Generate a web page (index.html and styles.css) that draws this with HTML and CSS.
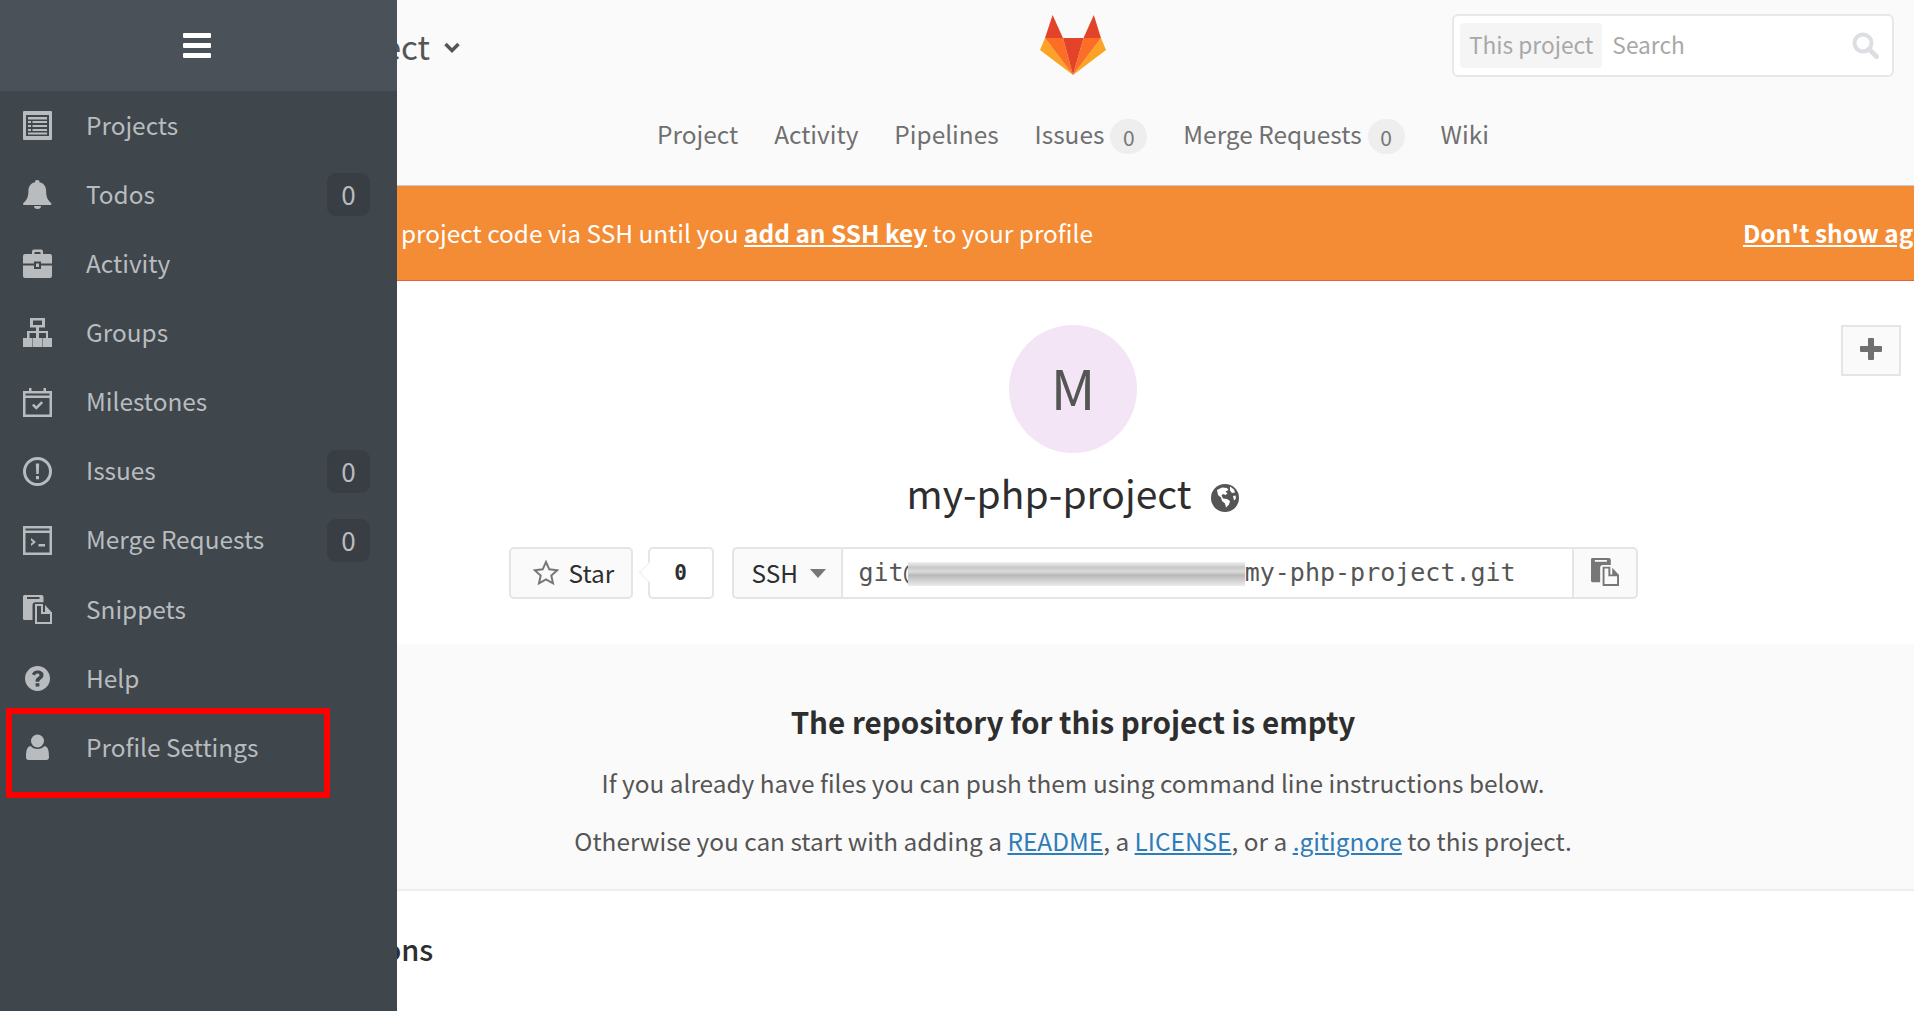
FILE: index.html
```html
<!DOCTYPE html>
<html lang="en">
<head>
<meta charset="UTF-8">
<meta name="viewport" content="width=device-width, initial-scale=1.0">
<title>my-php-project</title>
<link rel="stylesheet" href="styles.css">
</head>
<body>

<svg class="icon-defs" width="0" height="0">
  <symbol id="i-projects" viewBox="0 0 29 29">
    <path fill-rule="evenodd" d="M0 1a1 1 0 0 1 1-1h27a1 1 0 0 1 1 1v27a1 1 0 0 1-1 1H1a1 1 0 0 1-1-1zM3 4v21h23V4z"/>
    <path d="M5 6h19v2.500H5zM5 10h3v2H5zM9.500 10H24v2H9.500zM5 14h3v2H5zM9.500 14H24v2H9.500zM5 18h3v2H5zM9.500 18H24v2H9.500zM5 21.500h19v2H5z"/>
  </symbol>
  <symbol id="i-bell" viewBox="0 0 29 29">
    <path d="M14.500 0a2 2 0 0 1 2 2.200c4.300.9 6.600 4.300 6.600 8.600 0 6.500 1.700 9.600 5.400 12.700 0 1-.6 1.500-1.500 1.500H1.500C.6 25 0 24.500 0 23.500c3.700-3.100 5.400-6.200 5.400-12.700 0-4.300 2.300-7.700 6.600-8.600A2 2 0 0 1 14.500 0z"/>
    <path d="M11 26h7a3.500 3 0 0 1-7 0z"/>
  </symbol>
  <symbol id="i-briefcase" viewBox="0 0 29 29">
    <path fill-rule="evenodd" d="M9 5V2.500A2 2 0 0 1 11 .5h7a2 2 0 0 1 2 2V5h7a2 2 0 0 1 2 2v7.500H18v-2h-7v2H0V7a2 2 0 0 1 2-2zM11.500 5h6V3h-6z"/>
    <path fill-rule="evenodd" d="M0 16.500h11V20h7v-3.500h11V27a2 2 0 0 1-2 2H2a2 2 0 0 1-2-2z"/>
    <path d="M13 14.500h3V18h-3z"/>
  </symbol>
  <symbol id="i-sitemap" viewBox="0 0 29 29">
    <path fill-rule="evenodd" d="M7 0h15v9.500h-6V13h9v7h4v9h-10v-9h4v-5H16v5h3.500v9h-10v-9H13v-5H6.500v5h3.500v9H0v-9h4v-7h9V9.500H7zM10 2.500v4.500h9V2.500z"/>
  </symbol>
  <symbol id="i-calendar" viewBox="0 0 29 29">
    <path fill-rule="evenodd" d="M0 3h6V0h2.500v3h12V0H23v3h6v26H0zM2.500 5.500v2h24v-2zM2.500 10v16.500h24V10z"/>
    <path d="M9 17.500l1.800-1.800 2.500 2.500 5-5 1.800 1.800-6.800 6.800z"/>
  </symbol>
  <symbol id="i-issue" viewBox="0 0 29 29">
    <path fill-rule="evenodd" d="M14.500 0a14.500 14.500 0 1 1 0 29 14.500 14.500 0 0 1 0-29zm0 3a11.500 11.500 0 1 0 0 23 11.500 11.500 0 0 0 0-23z"/>
    <path d="M12.800 6.500h3.400l-.5 10.500h-2.400zM13 19h3v3.200h-3z"/>
  </symbol>
  <symbol id="i-terminal" viewBox="0 0 29 29">
    <path fill-rule="evenodd" d="M0 0h29v29H0zM2.500 2.500v2h24v-2zM2.500 7v19.500h24V7z"/>
    <path d="M8 12l5 4-5 4v-2.600l2-1.400-2-1.400zM15.500 18h6.500v2.500h-6.500z"/>
  </symbol>
  <symbol id="i-files" viewBox="0 0 29 29">
    <path fill-rule="evenodd" d="M1.500 0h17a2 2 0 0 1 2 2v5.200h-8a3 3 0 0 0-3 3V25H1.500A1.500 1.500 0 0 1 0 23.500V1.500A1.500 1.500 0 0 1 1.500 0zM4 2v2h12.500V2z"/>
    <path fill-rule="evenodd" d="M12 9h8v8h9v12H12zM14 11v16h13V19h-9v-8zM22 10l6.500 7H22z"/>
  </symbol>
  <symbol id="i-help" viewBox="0 0 29 29">
    <path fill-rule="evenodd" d="M14.500 2a12.500 12.500 0 1 1 0 25 12.500 12.500 0 0 1 0-25zM12.600 19.300v3.300h3.800v-3.300zM14.700 6.500c-3 0-5 1.400-5.700 3.800l3 1.300c.4-1.200 1.200-2 2.500-2 1.200 0 2 .6 2 1.500 0 2.100-4 2.400-4 6.100v.6h3.800c0-2.700 4.200-2.900 4.200-6.900 0-2.800-2.500-4.400-5.800-4.400z"/>
  </symbol>
  <symbol id="i-user" viewBox="0 0 29 29">
    <circle cx="14.500" cy="8" r="6.500"/>
    <path d="M7.500 13c1.700 2 4.200 3 7 3s5.300-1 7-3c3.500.7 4.500 4.200 4.500 11.500 0 1.600-1.100 2.500-2.500 2.500H5.500C4.100 27 3 26.100 3 24.500 3 17.200 4 13.700 7.500 13z"/>
  </symbol>
</svg>

<aside class="sidebar">
  <div class="sidebar-top">
    <span class="burger"><i></i><i></i><i></i></span>
  </div>
  <ul class="side-nav">
    <li><svg class="side-icon"><use href="#i-projects"/></svg><span>Projects</span></li>
    <li><svg class="side-icon"><use href="#i-bell"/></svg><span>Todos</span><b class="side-count">0</b></li>
    <li><svg class="side-icon"><use href="#i-briefcase"/></svg><span>Activity</span></li>
    <li><svg class="side-icon"><use href="#i-sitemap"/></svg><span>Groups</span></li>
    <li><svg class="side-icon"><use href="#i-calendar"/></svg><span>Milestones</span></li>
    <li><svg class="side-icon"><use href="#i-issue"/></svg><span>Issues</span><b class="side-count">0</b></li>
    <li><svg class="side-icon"><use href="#i-terminal"/></svg><span>Merge Requests</span><b class="side-count">0</b></li>
    <li><svg class="side-icon"><use href="#i-files"/></svg><span>Snippets</span></li>
    <li><svg class="side-icon"><use href="#i-help"/></svg><span>Help</span></li>
    <li><svg class="side-icon"><use href="#i-user"/></svg><span>Profile Settings</span></li>
  </ul>
  <div class="highlight-box"></div>
</aside>

<header class="top-header">
  <div class="title-row">
    <div class="crumb">
      <span>my-php-project</span>
      <svg class="chevron" viewBox="0 0 16 12"><path d="M1.500 2l6.500 6.500L14.500 2" fill="none" stroke="#555" stroke-width="3.500"/></svg>
    </div>
    <svg class="logo" viewBox="0 0 66 60">
      <polygon fill="#e24329" points="12.600,0 5,23 23,23"/>
      <polygon fill="#e24329" points="53.800,0 61,23 43.500,23"/>
      <polygon fill="#fca326" points="5,23 0,35 33,60"/>
      <polygon fill="#fca326" points="61,23 66,35 33,60"/>
      <polygon fill="#fc6d26" points="5,23 23,23 33,60"/>
      <polygon fill="#fc6d26" points="61,23 43.500,23 33,60"/>
      <polygon fill="#e24329" points="23,23 43.500,23 33,60"/>
    </svg>
    <div class="search">
      <span class="search-scope">This project</span>
      <span class="search-text">Search</span>
      <svg class="search-icon" viewBox="0 0 27 27"><circle cx="11" cy="11" r="8.500" fill="none" stroke="#dcdee2" stroke-width="4"/><path d="M17 17l7.500 7.500" stroke="#dcdee2" stroke-width="5" stroke-linecap="round"/></svg>
    </div>
  </div>
  <nav class="tabs">
    <a>Project</a>
    <a>Activity</a>
    <a>Pipelines</a>
    <a>Issues <b class="tab-count">0</b></a>
    <a>Merge Requests <b class="tab-count">0</b></a>
    <a>Wiki</a>
  </nav>
</header>

<div class="ssh-banner">
  <span class="ssh-msg">project code via SSH until you <a>add an SSH key</a> to your profile</span>
  <a class="ssh-hide">Don't show again</a>
</div>

<section class="project-home">
  <div class="add-row">
    <button class="add-btn"><svg viewBox="0 0 22 22" width="22" height="22"><path d="M8 1a1 1 0 0 1 1-1h4a1 1 0 0 1 1 1v7h7a1 1 0 0 1 1 1v4a1 1 0 0 1-1 1h-7v7a1 1 0 0 1-1 1H9a1 1 0 0 1-1-1v-7H1a1 1 0 0 1-1-1V9a1 1 0 0 1 1-1h7z" fill="#707070"/></svg></button>
  </div>
  <div class="avatar">M</div>
  <h1 class="project-name">my-php-project
    <svg class="globe" viewBox="0 0 28 28">
      <circle cx="14" cy="14" r="14" fill="#555"/>
      <path fill="#fff" d="M6 6l5-2.500 5 .5 1.500 2-3 1.500 2 2-2 1.500-2.500-1-1.500 1.500 1.500 3 4 .5 3 2-1 3.500-3 3-1-4-3-2.500-1-3.500L7 11zM19 2.500l4 3 1 3-3 .5-2-2.500zM22 12l2.500-.5.500 3-2 2z"/>
    </svg>
  </h1>
  <div class="actions">
    <button class="btn star-btn">
      <svg viewBox="0 0 26 25" width="26" height="25"><path d="M13 2l3.300 7.300 7.900.9-5.900 5.300 1.700 7.800L13 19.300l-7 4 1.700-7.800L1.800 10.200l7.900-.9z" fill="none" stroke="#777" stroke-width="2"/></svg>
      Star
    </button>
    <span class="star-count">0</span>
    <div class="clone">
      <button class="btn ssh-btn">SSH <i class="caret"></i></button>
      <div class="clone-url">git@<span class="smudge"></span>my-php-project.git</div>
      <button class="btn copy-btn"><svg width="28" height="28" fill="#777"><use href="#i-files"/></svg></button>
    </div>
  </div>
</section>

<section class="empty-repo">
  <h2>The repository for this project is empty</h2>
  <p>If you already have files you can push them using command line instructions below.</p>
  <p>Otherwise you can start with adding a <a>README</a>, a <a>LICENSE</a>, or a <a>.gitignore</a> to this project.</p>
</section>

<h3 class="cli-title">Command line instructions</h3>

</body>
</html>
```

FILE: styles.css
```css
* {
  box-sizing: border-box;
}
html, body {
  height: 100%;
}
body {
  margin: 0;
  font-family: "Noto Sans CJK SC", "Noto Sans", sans-serif;
  font-size: 24.4px;
  color: #555;
  background-color: #fff;
  overflow: hidden;
}
.icon-defs {
  position: absolute;
}

/* sidebar lies over the page */
.sidebar {
  position: absolute;
  left: 0;
  top: 0;
  bottom: 0;
  width: 397px;
  background-color: #3f464c;
  color: #b9bcbf;
  z-index: 5;
}
.sidebar-top {
  height: 91px;
  background-color: #4a5159;
  display: flex;
  align-items: center;
  justify-content: center;
  padding-bottom: 1px;
}
.burger {
  display: flex;
  flex-direction: column;
  gap: 5px;
  width: 28px;
  margin-right: 3px;
}
.burger i {
  display: block;
  height: 5px;
  background-color: #fff;
  border-radius: 1px;
}
.side-nav {
  list-style: none;
  margin: 0;
  padding: 0;
}
.side-nav li {
  height: 69.15px;
  display: flex;
  align-items: center;
  padding-left: 23px;
  padding-right: 27px;
  line-height: 34px;
}
.side-nav li span {
  margin-bottom: 2px;
}
.side-icon {
  width: 29px;
  height: 29px;
  fill: #b9bcbf;
  margin-right: 34px;
  flex-shrink: 0;
}
.side-count {
  margin-left: auto;
  width: 43px;
  height: 43px;
  line-height: 41px;
  text-align: center;
  font-weight: normal;
  font-size: 26px;
  background-color: #383e44;
  border-radius: 9px;
}
.highlight-box {
  position: absolute;
  left: 6px;
  top: 708px;
  width: 324px;
  height: 90px;
  border: 6px solid #f00;
  border-radius: 2px;
}

/* header */
.top-header {
  height: 186px;
  background-color: #fafafa;
  border-bottom: 1px solid #c9c9c9;
}
.title-row {
  height: 91px;
  display: flex;
  align-items: flex-start;
}
.crumb {
  margin-left: 100px;
  width: 360px;
  padding-top: 21px;
  display: flex;
  justify-content: flex-end;
  align-items: center;
  font-size: 33px;
  line-height: 50px;
  color: #555;
  white-space: nowrap;
}
.chevron {
  width: 16px;
  height: 12px;
  margin-left: 14px;
  margin-top: 4px;
  flex-shrink: 0;
}
.logo {
  width: 66px;
  height: 60px;
  margin-left: 580px;
  margin-top: 15px;
}
.search {
  margin-left: auto;
  margin-right: 20px;
  margin-top: 14px;
  width: 442px;
  height: 63px;
  background-color: #fff;
  border: 2px solid #e8e8e8;
  border-radius: 6px;
  display: flex;
  align-items: center;
  padding: 0 13px 0 6px;
  color: #a8a8a8;
  font-size: 22.7px;
}
.search-scope {
  background-color: #f5f5f5;
  border-radius: 4px;
  height: 45px;
  line-height: 44px;
  padding: 0 9px;
  margin-right: 10px;
  white-space: nowrap;
}
.search-text {
  margin-bottom: 3px;
}
.search-icon {
  width: 27px;
  height: 27px;
  margin-left: auto;
}
.tabs {
  display: flex;
  justify-content: center;
  gap: 36px;
  padding-left: 232px;
  height: 88px;
  padding-top: 23px;
  line-height: 40px;
  color: #707070;
}
.tabs a {
  white-space: nowrap;
  display: flex;
  align-items: flex-start;
  gap: 6px;
}
.tab-count {
  display: block;
  margin-top: 5px;
  width: 37px;
  height: 35px;
  line-height: 37px;
  border-radius: 18px;
  text-align: center;
  background-color: #eee;
  font-weight: normal;
  font-size: 21px;
  color: #777;
}

/* ssh warning */
.ssh-banner {
  height: 95px;
  background-color: #f48c35;
  border-bottom: 1px solid #e8603e;
  color: #fff;
  display: flex;
  align-items: center;
  white-space: nowrap;
  padding-left: 401px;
  padding-bottom: 2px;
}
.ssh-banner a {
  font-weight: bold;
  text-decoration: underline;
}
.ssh-hide {
  margin-left: 650px;
}

/* project home */
.project-home {
  height: 363px;
  padding-left: 232px;
  padding-top: 44px;
  display: flex;
  flex-direction: column;
  align-items: center;
}
.add-row {
  align-self: stretch;
  height: 0;
  display: flex;
  justify-content: flex-end;
  padding-right: 13px;
}
.add-btn {
  width: 60px;
  height: 51px;
  flex-shrink: 0;
  background-color: #fafafa;
  border: 2px solid #e5e5e5;
  display: flex;
  align-items: center;
  justify-content: center;
  padding: 0 0 3px;
}
.avatar {
  width: 128px;
  height: 128px;
  border-radius: 50%;
  background-color: #f3e5f5;
  text-align: center;
  font-size: 55px;
  line-height: 122px;
  color: #555;
}
.project-name {
  margin: 5px 0 0;
  font-size: 39px;
  font-weight: normal;
  line-height: 68px;
  color: #2e2e2e;
  display: flex;
  align-items: center;
}
.globe {
  width: 28px;
  height: 28px;
  margin-left: 20px;
  margin-top: 12px;
}
.actions {
  margin-top: 21px;
  display: flex;
  align-items: stretch;
  height: 52px;
}
.btn {
  font-family: inherit;
  font-size: 24.4px;
  color: #2e2e2e;
  background-color: #fafafa;
  border: 2px solid #e5e5e5;
  border-radius: 5px;
  display: flex;
  align-items: center;
  padding: 0 0 2px;
}
.star-btn {
  width: 124px;
  padding-left: 22px;
  gap: 10px;
}
.star-count {
  position: relative;
  margin-left: 15px;
  width: 66px;
  background-color: #fff;
  border: 2px solid #e5e5e5;
  border-radius: 5px;
  text-align: center;
  font-family: "DejaVu Sans Mono", monospace;
  font-weight: bold;
  font-size: 21px;
  line-height: 48px;
  color: #2e2e2e;
}
.star-count::before {
  content: "";
  position: absolute;
  left: -8px;
  top: 16px;
  width: 14px;
  height: 14px;
  background-color: #fff;
  border-left: 1px solid #eee;
  border-bottom: 1px solid #eee;
  transform: rotate(45deg);
}
.clone {
  margin-left: 18px;
  display: flex;
}
.ssh-btn {
  width: 109px;
  padding-left: 18px;
  gap: 12px;
  border-right: 0;
  border-radius: 5px 0 0 5px;
}
.caret {
  display: block;
  width: 0;
  height: 0;
  border-left: 8px solid transparent;
  border-right: 8px solid transparent;
  border-top: 9px solid #777;
  margin-top: 2px;
}
.clone-url {
  width: 734px;
  border: 2px solid #e5e5e5;
  background-color: #fff;
  padding-left: 16px;
  font-family: "DejaVu Sans Mono", monospace;
  font-size: 25px;
  line-height: 47px;
  color: #555;
  white-space: nowrap;
  display: flex;
}
.smudge {
  display: block;
  width: 337px;
  height: 24px;
  margin: 13px 0 0 -11px;
  background: linear-gradient(#f1f1f1, #c9c9c9 22%, #dadada 40%, #b9b9b9 55%, #cfcfcf 75%, #ececec);
}
.copy-btn {
  width: 66px;
  margin-left: -3px;
  justify-content: center;
  border-radius: 0 5px 5px 0;
  position: relative;
}

/* empty repo */
.empty-repo {
  height: 247px;
  background-color: #fafafa;
  border-bottom: 2px solid #eee;
  padding-left: 232px;
  padding-top: 56px;
  text-align: center;
}
.empty-repo h2 {
  margin: 0;
  font-size: 29.6px;
  line-height: 44px;
  font-weight: bold;
  color: #2e2e2e;
}
.empty-repo p {
  margin: 19px 0 0;
  line-height: 39px;
  color: #555;
}
.empty-repo a {
  color: #2e7cb8;
  text-decoration: underline;
}
.cli-title {
  margin: 37px 0 0 59px;
  font-size: 29px;
  line-height: 40px;
  font-weight: 500;
  color: #2e2e2e;
  white-space: nowrap;
}
```
